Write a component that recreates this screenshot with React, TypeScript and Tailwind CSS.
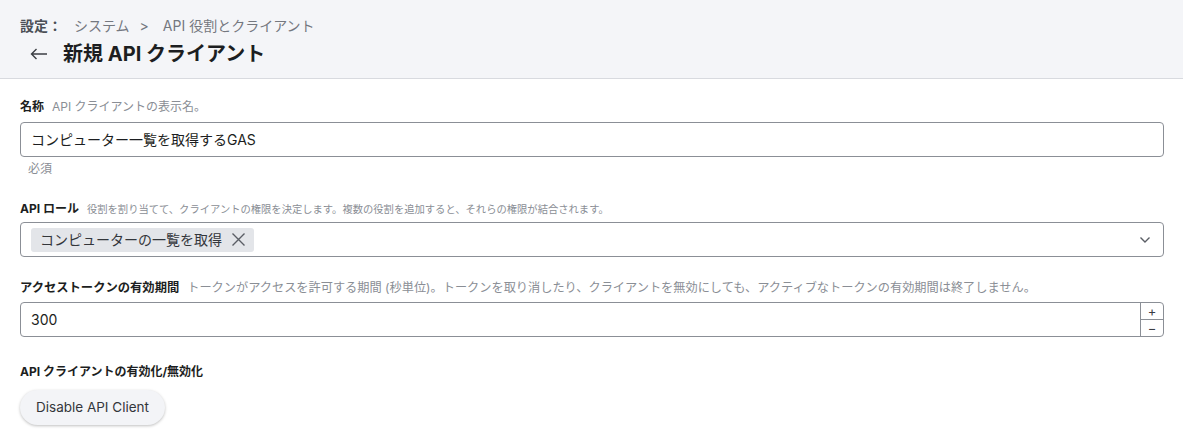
import React from "react";

const font = "font-['Inter','Noto_Sans_CJK_JP',sans-serif]";

export default function App() {
  return (
    <div className={`${font} w-[1183px] h-[443px] bg-white text-[#1c1e21] overflow-hidden`}>
      <div className="h-[79px] bg-[#f4f5f8] border-b border-[#d8dadf] px-[20px] pt-[15px]">
        <div className="flex items-center text-[14px] leading-[20px] text-[#74787f] translate-y-[1px]">
          <span className="font-semibold text-[#4b4f56]">設定：</span>
          <span className="ml-[12px]">システム</span>
          <span className="ml-[10px]">&gt;</span>
          <span className="ml-[14px]">API 役割とクライアント</span>
        </div>
        <div className="flex items-center mt-[5px]">
          <svg width="18" height="12" viewBox="0 0 18 12" className="ml-[10px]" fill="none" stroke="#3b3e44" strokeWidth="1.4">
            <path d="M17 6H1.5M6.5 1L1.5 6l5 5" />
          </svg>
          <span className="ml-[15px] text-[20px] leading-[28px] font-bold text-[#1c1e21]">新規 API クライアント</span>
        </div>
      </div>

      <div className="pl-[20px] pr-[19px] pt-[19px]">
        <div className="flex items-baseline h-[18px]">
          <span className="text-[12px] font-bold">名称</span>
          <span className="ml-[8px] text-[12px] text-[#8a8e95]">API クライアントの表示名。</span>
        </div>
        <div className="mt-[6px] h-[35px] border border-[#8b8f96] rounded-[4px] flex items-center px-[10px] text-[14px]">
          コンピューター一覧を取得するGAS
        </div>
        <div className="mt-[3px] ml-[8px] text-[12px] leading-[18px] text-[#8a8e95]">必須</div>

        <div className="flex items-baseline h-[18px] mt-[22px]">
          <span className="text-[12px] font-bold">API ロール</span>
          <span className="ml-[8px] text-[10.3px] text-[#8a8e95]">役割を割り当てて、クライアントの権限を決定します。複数の役割を追加すると、それらの権限が結合されます。</span>
        </div>
        <div className="mt-[4px] h-[35px] border border-[#8b8f96] rounded-[4px] flex items-center pl-[10px] pr-[12px]">
          <div className="h-[24px] rounded-[3px] bg-[#e3e5e9] flex items-center pl-[9px] pr-[8px] text-[14px] text-[#33363b]">
            コンピューターの一覧を取得
            <svg width="15" height="15" viewBox="0 0 15 15" className="ml-[9px]" stroke="#5a5e65" strokeWidth="1.4">
              <path d="M1.5 1.5l12 12M13.5 1.5l-12 12" />
            </svg>
          </div>
          <div className="flex-1" />
          <svg width="12" height="8" viewBox="0 0 12 8" fill="none" stroke="#5a5e65" strokeWidth="1.4">
            <path d="M1.5 1.5L6 6l4.5-4.5" />
          </svg>
        </div>

        <div className="flex items-baseline h-[18px] mt-[22px]">
          <span className="text-[12.3px] font-bold">アクセストークンの有効期間</span>
          <span className="ml-[8px] text-[12.2px] text-[#8a8e95]">トークンがアクセスを許可する期間 (秒単位)。トークンを取り消したり、クライアントを無効にしても、アクティブなトークンの有効期間は終了しません。</span>
        </div>
        <div className="mt-[5px] h-[35px] border border-[#8b8f96] rounded-[4px] flex items-stretch">
          <div className="flex-1 flex items-center px-[10px] text-[14px]">300</div>
          <div className="w-[23px] border-l border-[#8b8f96] flex flex-col text-[#3b3e44]">
            <div className="flex-1 flex items-center justify-center border-b border-[#8b8f96] text-[13px] leading-none">+</div>
            <div className="flex-1 flex items-center justify-center text-[13px] leading-none">−</div>
          </div>
        </div>

        <div className="mt-[26px] h-[18px] text-[12px] font-bold flex items-center">API クライアントの有効化/無効化</div>
        <div className="mt-[9px]">
          <button className="h-[35px] px-[16px] rounded-full bg-[#f3f4f7] shadow-[0_1px_3px_rgba(0,0,0,0.25)] text-[13.5px] text-[#33363b]">
            Disable API Client
          </button>
        </div>
      </div>
    </div>
  );
}
